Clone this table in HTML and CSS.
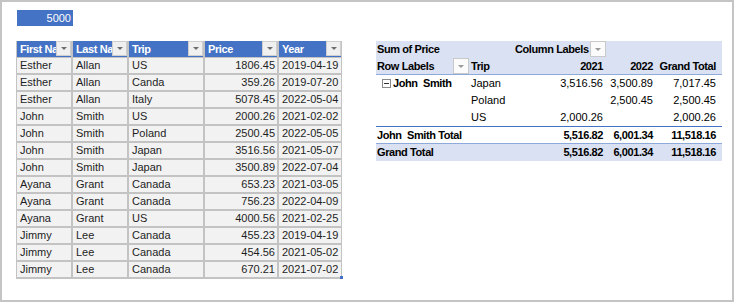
FILE: index.html
```html
<!DOCTYPE html>
<html>
<head>
    <title>Trips pivot</title>
    <link rel="stylesheet" href="styles.css">
</head>
<body>
    <div class="frame">
        <div class="left">
            <div class="input-cell">5000</div>
            <div class="sheet">
                <div class="hd"><span class="hd-text">First Name</span><span class="filter"></span></div>
                <div class="hd"><span class="hd-text">Last Name</span><span class="filter"></span></div>
                <div class="hd"><span class="hd-text">Trip</span><span class="filter"></span></div>
                <div class="hd"><span class="hd-text">Price</span><span class="filter"></span></div>
                <div class="hd"><span class="hd-text">Year</span><span class="filter"></span></div>

                <div class="c">Esther</div><div class="c">Allan</div><div class="c">US</div><div class="c num">1806.45</div><div class="c">2019-04-19</div>
                <div class="c">Esther</div><div class="c">Allan</div><div class="c">Canda</div><div class="c num">359.26</div><div class="c">2019-07-20</div>
                <div class="c">Esther</div><div class="c">Allan</div><div class="c">Italy</div><div class="c num">5078.45</div><div class="c">2022-05-04</div>
                <div class="c">John</div><div class="c">Smith</div><div class="c">US</div><div class="c num">2000.26</div><div class="c">2021-02-02</div>
                <div class="c">John</div><div class="c">Smith</div><div class="c">Poland</div><div class="c num">2500.45</div><div class="c">2022-05-05</div>
                <div class="c">John</div><div class="c">Smith</div><div class="c">Japan</div><div class="c num">3516.56</div><div class="c">2021-05-07</div>
                <div class="c">John</div><div class="c">Smith</div><div class="c">Japan</div><div class="c num">3500.89</div><div class="c">2022-07-04</div>
                <div class="c">Ayana</div><div class="c">Grant</div><div class="c">Canada</div><div class="c num">653.23</div><div class="c">2021-03-05</div>
                <div class="c">Ayana</div><div class="c">Grant</div><div class="c">Canada</div><div class="c num">756.23</div><div class="c">2022-04-09</div>
                <div class="c">Ayana</div><div class="c">Grant</div><div class="c">US</div><div class="c num">4000.56</div><div class="c">2021-02-25</div>
                <div class="c">Jimmy</div><div class="c">Lee</div><div class="c">Canada</div><div class="c num">455.23</div><div class="c">2019-04-19</div>
                <div class="c">Jimmy</div><div class="c">Lee</div><div class="c">Canada</div><div class="c num">454.56</div><div class="c">2021-05-02</div>
                <div class="c">Jimmy</div><div class="c">Lee</div><div class="c">Canada</div><div class="c num">670.21</div><div class="c last">2021-07-02<span class="handle"></span></div>
            </div>
        </div>

        <div class="pivot">
            <div class="prow head">
                <div class="p b">Sum of Price</div>
                <div class="p"></div>
                <div class="p b with-filter"><span>Column Labels</span><span class="filter light"></span></div>
                <div class="p"></div>
                <div class="p"></div>
            </div>
            <div class="prow head head-end">
                <div class="p b with-filter"><span>Row Labels</span><span class="filter light"></span></div>
                <div class="p b">Trip</div>
                <div class="p b r">2021</div>
                <div class="p b r">2022</div>
                <div class="p b r last-col">Grand Total</div>
            </div>
            <div class="prow">
                <div class="p b"><svg class="minus" width="9" height="9" viewBox="0 0 9 9"><rect x="0.5" y="0.5" width="8" height="8" fill="#fff" stroke="#8a8a8a"/><path d="M2 4.5h5" stroke="#333"/></svg>John&nbsp; Smith</div>
                <div class="p">Japan</div>
                <div class="p r">3,516.56</div>
                <div class="p r">3,500.89</div>
                <div class="p r last-col">7,017.45</div>
            </div>
            <div class="prow">
                <div class="p"></div>
                <div class="p">Poland</div>
                <div class="p r"></div>
                <div class="p r">2,500.45</div>
                <div class="p r last-col">2,500.45</div>
            </div>
            <div class="prow">
                <div class="p"></div>
                <div class="p">US</div>
                <div class="p r">2,000.26</div>
                <div class="p r"></div>
                <div class="p r last-col">2,000.26</div>
            </div>
            <div class="prow subtotal">
                <div class="p b">John&nbsp; Smith Total</div>
                <div class="p"></div>
                <div class="p b r">5,516.82</div>
                <div class="p b r">6,001.34</div>
                <div class="p b r last-col">11,518.16</div>
            </div>
            <div class="prow grand">
                <div class="p b">Grand Total</div>
                <div class="p"></div>
                <div class="p b r">5,516.82</div>
                <div class="p b r">6,001.34</div>
                <div class="p b r last-col">11,518.16</div>
            </div>
        </div>
    </div>
</body>
</html>
```

FILE: styles.css
```css
body {
    margin: 0;
    background: #fff;
    font-family: "Liberation Sans", Arial, sans-serif;
    font-size: 11px;
    color: #1e1e1e;
}
.frame {
    box-sizing: border-box;
    width: 734px;
    height: 302px;
    border: 2px solid #c4c4c4;
    padding: 8px 0 0 15px;
    display: flex;
    gap: 34px;
}
.left {
    display: flex;
    flex-direction: column;
}
.input-cell {
    width: 56px;
    height: 16px;
    line-height: 16px;
    box-sizing: border-box;
    padding-right: 2px;
    background: #4472c4;
    color: #fff;
    text-align: right;
}
.sheet {
    margin: 15px 0 0 -1px;
    display: grid;
    grid-template-columns: 54px 54px 74px 72px 62px;
    grid-auto-rows: 15px;
    gap: 2px;
    padding: 0 1px 2px 1px;
    background: #c3c3c3;
    width: max-content;
}
.sheet .hd {
    height: 16px;
    margin-bottom: -1px;
    background: #4472c4;
    color: #fff;
    font-weight: bold;
    letter-spacing: -0.4px;
    display: flex;
    align-items: center;
}
.hd-text {
    flex: 1;
    overflow: hidden;
    white-space: nowrap;
    padding-left: 3px;
    line-height: 16px;
}
.filter {
    flex: none;
    width: 15px;
    height: 15px;
    box-sizing: border-box;
    border: 1px solid #cfcfcf;
    background: #f0f0f0;
    display: flex;
    align-items: center;
    justify-content: center;
    align-self: flex-start;
}
.filter::after {
    content: "";
    border-left: 3px solid transparent;
    border-right: 3px solid transparent;
    border-top: 3px solid #6e6e6e;
}
.filter.light {
    border-color: #c9c9c9;
    background: #fbfbfb;
    height: 16px;
    width: 16px;
}
.filter.light::after {
    border-top-color: #9a9a9a;
}
.sheet .c {
    background: #f2f2f2;
    line-height: 15px;
    padding-left: 3px;
    white-space: nowrap;
    overflow: hidden;
}
.sheet .num {
    text-align: right;
    padding: 0 2px 0 0;
}
.sheet .last {
    position: relative;
    overflow: visible;
}
.handle {
    position: absolute;
    right: -2px;
    bottom: -2px;
    width: 3px;
    height: 3px;
    background: #4472c4;
}
.pivot {
    margin-top: 31px;
    width: 346px;
    color: #000;
}
.prow {
    display: grid;
    grid-template-columns: 94px 44px 93px 50px 65px;
    height: 17px;
    line-height: 17px;
}
.prow.head {
    background: #d9e1f2;
}
.prow.head-end {
    border-bottom: 1px solid #8ea9db;
    height: 16px;
    line-height: 16px;
}
.p {
    padding: 0 4px 0 1px;
    white-space: nowrap;
}
.p.b {
    font-weight: bold;
    letter-spacing: -0.4px;
}
.p.r {
    text-align: right;
}
.p.last-col {
    padding-right: 6px;
}
.with-filter {
    display: flex;
    justify-content: space-between;
    align-items: center;
    padding-right: 1px;
}
.minus {
    vertical-align: -1px;
    margin: 0 2px 0 5px;
}
.prow.subtotal {
    border-top: 1px solid #4472c4;
    height: 16px;
    line-height: 16px;
}
.prow.grand {
    border-top: 1px solid #8ea9db;
    background: #d9e1f2;
    height: 17px;
}
```
